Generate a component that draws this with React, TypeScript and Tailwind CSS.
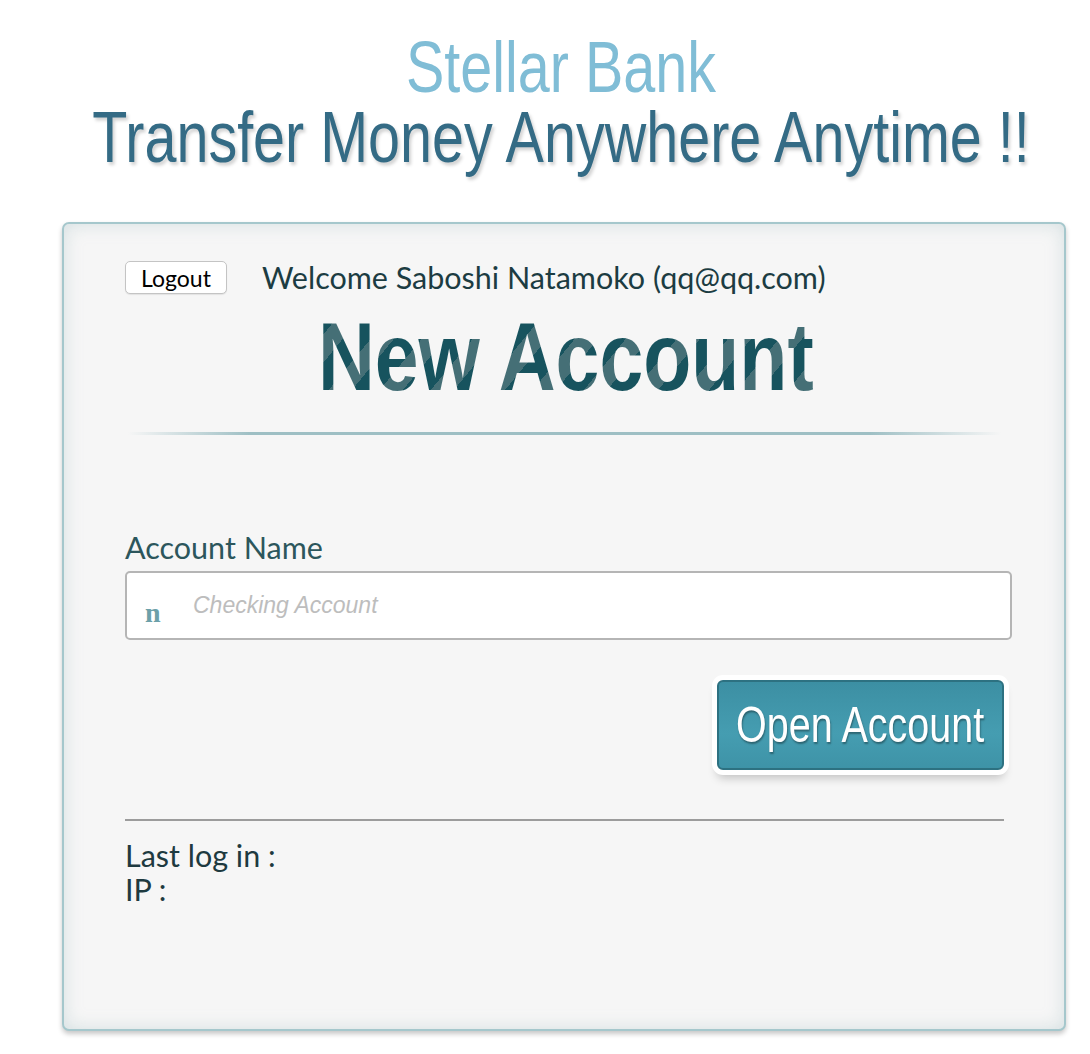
import React from "react";

export default function App() {
  const trebuchet = { fontFamily: "Lato, 'Noto Sans', sans-serif" };
  return (
    <div className="min-h-[1054px] w-[1090px] bg-white" style={{ fontFamily: "'Liberation Sans', Arial, sans-serif" }}>
      <header className="flex flex-col gap-[15px] pt-[39.5px] pb-[7.5px] pl-[32px]">
        <div className="text-center text-[57.5px] leading-[55px] text-[#80bdd6] scale-y-[1.27] whitespace-nowrap font-['Liberation_Sans',Arial,sans-serif]">
          Stellar Bank
        </div>
        <div className="text-center text-[57.5px] leading-[55px] text-[#346b85] scale-y-[1.27] whitespace-nowrap [text-shadow:2px_2px_3px_rgba(0,0,0,0.18)] font-['Liberation_Sans',Arial,sans-serif]">
          Transfer Money Anywhere Anytime !!
        </div>
      </header>

      <main className="ml-[62px] mt-[50px] w-[1004px] h-[809px] rounded-[7px] border-2 border-[#a5c7cc] bg-[#f6f6f6] pl-[61px] pr-[52px] pt-[37px] shadow-[inset_0_0_18px_rgba(150,180,186,0.35),0_3px_5px_rgba(0,0,0,0.22)]">
        <div className="flex h-[33px] items-center">
          <button className="h-[33px] w-[102px] rounded-[5px] border border-[#c4c4c4] bg-white text-[23px] leading-[30px] text-black shadow-[0_1px_1px_rgba(0,0,0,0.08)]" style={trebuchet}>
            Logout
          </button>
          <span className="ml-[35px] whitespace-nowrap text-[30.5px] leading-[33px] text-[#1c3c42]" style={trebuchet}>
            Welcome Saboshi Natamoko (qq@qq.com)
          </span>
        </div>

        <div className="mt-[13px] flex justify-center">
          <h1 className="inline-block whitespace-nowrap pr-[6px] text-[96px] leading-[100px] font-bold scale-x-[0.82] bg-clip-text text-transparent bg-[repeating-linear-gradient(135deg,#17535e_0px,#17535e_24px,#456f76_24px,#456f76_44px)] font-['Liberation_Sans',Arial,sans-serif]">
            New Account
          </h1>
        </div>

        <div className="mt-[25px] ml-[3px] mr-[11px] h-[3px] bg-[linear-gradient(90deg,rgba(158,191,196,0)_0%,#9ebfc4_14%,#9ebfc4_85%,rgba(158,191,196,0)_100%)]" />

        <label className="mt-[95px] block text-[30.5px] leading-[34px] text-[#2c565c]" style={trebuchet}>
          Account Name
        </label>

        <div className="mt-[7px] flex h-[69px] items-center rounded-[5px] border-2 border-[#b5b5b5] bg-white">
          <span className="ml-[18px] mt-[14px] w-[48px] text-[28px] font-bold text-[#6ca0a9] font-['Liberation_Serif',serif]">
            n
          </span>
          <input
            className="flex-1 bg-transparent text-[23px] outline-none placeholder:italic placeholder:text-[#bdbdbd] font-['Liberation_Sans',Arial,sans-serif]"
            placeholder="Checking Account"
          />
        </div>

        <div className="mt-[40px] flex justify-end pr-[8px]">
          <button className="flex h-[90px] w-[287px] items-center justify-center rounded-[6px] border-2 border-[#2d7181] bg-[linear-gradient(180deg,#3c8fa3,#459db1_60%,#3e93a7)] shadow-[0_0_0_5px_#ffffff,0_8px_10px_rgba(0,0,0,0.22)]">
            <span className="inline-block whitespace-nowrap scale-x-[0.79] text-[50px] leading-[50px] text-white [text-shadow:1px_2px_2px_rgba(0,0,0,0.35)] font-['Liberation_Sans',Arial,sans-serif]">
              Open Account
            </span>
          </button>
        </div>

        <hr className="mt-[49px] mr-[8px] border-0 border-t-2 border-[#9c9c9c]" />

        <div className="mt-[17px] text-[30.5px] leading-[34px] text-[#1e3a40]" style={trebuchet}>
          <div>Last log in :</div>
          <div>IP :</div>
        </div>
      </main>
      <div className="h-[22px]" />
    </div>
  );
}
